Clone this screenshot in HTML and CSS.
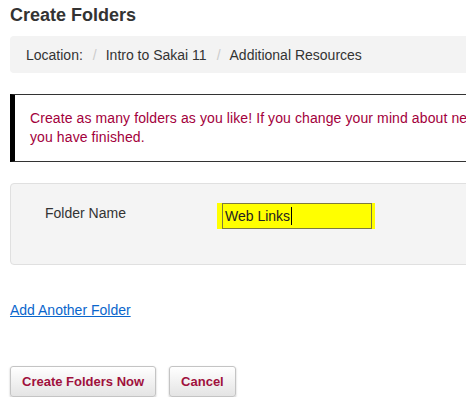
FILE: index.html
```html
<!DOCTYPE html>
<html lang="en">
<head>
<meta charset="utf-8">
<title>Create Folders</title>
<link rel="stylesheet" href="styles.css">
</head>
<body>
<div class="page">
  <h1 class="title">Create Folders</h1>
  <nav class="crumbs">
    <span class="crumb">Location:</span><span class="sep">/</span>
    <span class="crumb">Intro to Sakai 11</span><span class="sep">/</span>
    <span class="crumb">Additional Resources</span>
  </nav>
  <div class="notice">Create as many folders as you like! If you change your mind about needing more folders, remove the extra rows when<br>you have finished.</div>
  <div class="formbox">
    <label class="label" for="f1">Folder Name</label>
    <span class="hilite"><span class="field" id="f1" role="textbox">Web Links<span class="caret"></span></span></span>
  </div>
  <a class="addlink" href="#">Add Another Folder</a>
  <div class="actions">
    <button class="btn" type="button">Create Folders Now</button>
    <button class="btn" type="button">Cancel</button>
  </div>
</div>
</body>
</html>
```
FILE: styles.css
```css
html, body {
  margin: 0;
  padding: 0;
  overflow: hidden;
  background: #fff;
}
body {
  font-family: "Liberation Sans", Arial, sans-serif;
  font-size: 14px;
  color: #333;
}
.page {
  width: 640px;
  padding-left: 10px;
  display: flex;
  flex-direction: column;
  align-items: flex-start;
}
.title {
  margin: 5px 0 0;
  font-size: 18px;
  font-weight: bold;
  line-height: 21px;
  color: #333;
}
.crumbs {
  margin-top: 10px;
  align-self: stretch;
  box-sizing: border-box;
  height: 37px;
  padding: 0 16px;
  display: flex;
  align-items: center;
  background: #f3f3f3;
  border-radius: 4px;
  line-height: 16px;
}
.sep {
  color: #ccc;
  margin: 0 9px 0 10px;
}
.notice {
  margin-top: 21px;
  align-self: stretch;
  border-top: 1px solid #333;
  border-bottom: 1px solid #333;
  border-left: 5px solid #000;
  padding: 14px 15px;
  line-height: 19px;
  color: #a3003c;
  letter-spacing: 0.1px;
  white-space: nowrap;
}
.formbox {
  margin-top: 21px;
  align-self: stretch;
  box-sizing: border-box;
  height: 82px;
  background: #f4f4f4;
  border: 1px solid #e0e0e0;
  border-radius: 4px;
  padding: 19px 0 0 34px;
  display: flex;
  align-items: flex-start;
}
.label {
  width: 172px;
  margin-top: 2px;
  line-height: 16px;
}
.hilite {
  display: flex;
  background: #ffff00;
  padding: 0 3px 0 5px;
}
.field {
  box-sizing: border-box;
  width: 150px;
  height: 26px;
  border: 1px solid #7d7a40;
  background: #ffff00;
  color: #222;
  padding: 0 2px;
  line-height: 24px;
  display: flex;
  align-items: center;
}
.caret {
  display: inline-block;
  width: 1px;
  height: 18px;
  background: #000;
  margin-left: 1px;
}
.addlink {
  margin-top: 37px;
  line-height: 16px;
  color: #0a66cc;
  text-decoration: underline;
}
.actions {
  margin-top: 48px;
  display: flex;
  gap: 13px;
}
.btn {
  font-family: "Liberation Sans", Arial, sans-serif;
  font-size: 13px;
  font-weight: bold;
  letter-spacing: 0;
  color: #a0103c;
  height: 31px;
  padding: 0 11px;
  border: 1px solid #c4c4c4;
  border-radius: 3px;
  background: linear-gradient(#ffffff, #e4e4e4);
  box-shadow: 0 1px 2px rgba(0, 0, 0, 0.25);
  cursor: pointer;
}
```
